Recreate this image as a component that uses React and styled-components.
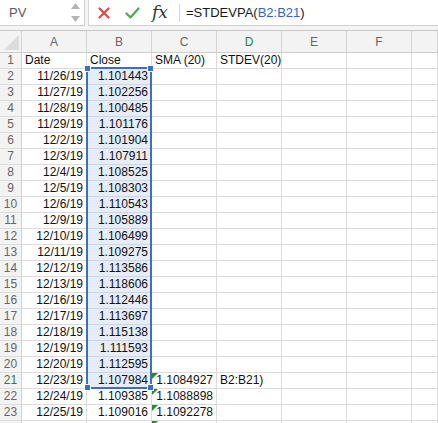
import React from 'react'
import styled, { createGlobalStyle } from 'styled-components'

const GlobalStyle = createGlobalStyle`
  html, body {
    margin: 0;
    padding: 0;
    background: #ffffff;
  }
  body {
    width: 438px;
    height: 423px;
    overflow: hidden;
    font-family: "Liberation Sans", Arial, sans-serif;
  }
`

const Sheet = styled.div`
  width: 438px;
  height: 423px;
  overflow: hidden;
  display: flex;
  flex-direction: column;
`

const FormulaBar = styled.div`
  height: 31px;
  box-sizing: border-box;
  display: flex;
  background: #f4f4f4;
  border-bottom: 1px solid #c6c6c6;
  flex-shrink: 0;
`

const NameBox = styled.div`
  width: 85px;
  height: 26px;
  box-sizing: border-box;
  background: #ffffff;
  border-right: 1px solid #cfcfcf;
  border-bottom: 1px solid #cfcfcf;
  display: flex;
  align-items: center;
  padding-left: 9px;
  font-size: 13px;
  color: #5a5a5a;
  position: relative;
`

const Spinner = styled.div`
  position: absolute;
  right: 4px;
  top: 3px;
  bottom: 3px;
  width: 9px;
  display: flex;
  flex-direction: column;
  justify-content: space-between;
  align-items: center;
`

const FormulaField = styled.div`
  flex: 1;
  height: 26px;
  box-sizing: border-box;
  margin-left: 3px;
  background: #ffffff;
  border-left: 1px solid #d6d6d6;
  border-bottom: 1px solid #cfcfcf;
  display: flex;
  align-items: center;
`

const IconButton = styled.div`
  width: ${p => p.w || 27}px;
  display: flex;
  justify-content: center;
  align-items: center;
`

const Fx = styled.span`
  font-family: "DejaVu Serif", "Liberation Serif", serif;
  font-style: italic;
  font-size: 17px;
  color: #333;
  padding-bottom: 2px;
`

const Divider = styled.div`
  width: 1px;
  height: 18px;
  background: #d6d6d6;
  margin: 0 6px 0 4px;
`

const FormulaText = styled.div`
  font-size: 13px;
  color: #1a1a1a;
  white-space: nowrap;
`

const Ref = styled.span`
  color: #3466c8;
`

const Grid = styled.div`
  position: relative;
  flex: 1;
`

const Row = styled.div`
  display: grid;
  grid-template-columns: 22px repeat(6, 65px) 1fr;
  height: ${p => (p.header ? 22 : 16)}px;
`

const Cell = styled.div`
  box-sizing: border-box;
  border-right: 1px solid ${p => (p.sel ? '#ccd5e6' : '#dcdcdc')};
  border-bottom: 1px solid ${p => (p.sel ? '#ccd5e6' : '#dcdcdc')};
  background: ${p => (p.sel ? '#e6ecf8' : '#ffffff')};
  font-size: 12px;
  line-height: 15px;
  color: #111;
  padding: 0 3px;
  text-align: ${p => p.align || 'left'};
  white-space: nowrap;
  overflow: visible;
  position: relative;
`

const HeadCell = styled.div`
  box-sizing: border-box;
  border-right: 1px solid #d3d3d3;
  border-bottom: 1px solid #cdcdcd;
  background: #f3f3f3;
  font-size: 12px;
  color: ${p => (p.active ? '#2e7d3e' : '#666')};
  display: flex;
  align-items: center;
  justify-content: center;
  position: relative;
`

const RowHead = styled.div`
  box-sizing: border-box;
  border-right: 1px solid #d3d3d3;
  border-bottom: 1px solid #dcdcdc;
  background: #f3f3f3;
  font-size: 12px;
  line-height: 15px;
  color: ${p => (p.active ? '#2e7d3e' : '#666')};
  text-align: center;
`

const Corner = styled.div`
  position: absolute;
  right: 2px;
  bottom: 2px;
  width: 0;
  height: 0;
  border-left: 15px solid transparent;
  border-bottom: 15px solid #dcdcdc;
`

const ErrorMark = styled.div`
  position: absolute;
  left: 0;
  top: 0;
  width: 0;
  height: 0;
  border-top: 6px solid #2f8a2f;
  border-right: 6px solid transparent;
`

const Selection = styled.div`
  position: absolute;
  left: 86px;
  top: 36px;
  width: 66px;
  height: 322px;
  box-sizing: border-box;
  border: 2px solid #3b70c8;
  pointer-events: none;
`

const Handle = styled.div`
  position: absolute;
  width: 5px;
  height: 5px;
  background: #3b70c8;
  border: 1px solid #ffffff;
  box-sizing: content-box;
  ${p => (p.top ? 'top: -4px;' : 'bottom: -4px;')}
  ${p => (p.left ? 'left: -4px;' : 'right: -4px;')}
`

const closes = [
  ['11/26/19', '1.101443'],
  ['11/27/19', '1.102256'],
  ['11/28/19', '1.100485'],
  ['11/29/19', '1.101176'],
  ['12/2/19', '1.101904'],
  ['12/3/19', '1.107911'],
  ['12/4/19', '1.108525'],
  ['12/5/19', '1.108303'],
  ['12/6/19', '1.110543'],
  ['12/9/19', '1.105889'],
  ['12/10/19', '1.106499'],
  ['12/11/19', '1.109275'],
  ['12/12/19', '1.113586'],
  ['12/13/19', '1.118606'],
  ['12/16/19', '1.112446'],
  ['12/17/19', '1.113697'],
  ['12/18/19', '1.115138'],
  ['12/19/19', '1.111593'],
  ['12/20/19', '1.112595'],
  ['12/23/19', '1.107984', '1.1084927', 'B2:B21)'],
  ['12/24/19', '1.109385', '1.1088898'],
  ['12/25/19', '1.109016', '1.1092278'],
  ['', '', ''],
]

const letters = ['A', 'B', 'C', 'D', 'E', 'F', '']

const App = () => {
  return (
    <Sheet>
      <GlobalStyle />
      <FormulaBar>
        <NameBox>
          PV
          <Spinner>
            <svg width="9" height="6" viewBox="0 0 9 6"><path d="M4.5 0L9 6H0z" fill="#b5b5b5" /></svg>
            <svg width="9" height="6" viewBox="0 0 9 6"><path d="M0 0h9L4.5 6z" fill="#b5b5b5" /></svg>
          </Spinner>
        </NameBox>
        <FormulaField>
          <IconButton w={30}>
            <svg width="12" height="12" viewBox="0 0 12 12">
              <path d="M1.5 1.5L10.5 10.5M10.5 1.5L1.5 10.5" stroke="#e0474c" strokeWidth="2.2" strokeLinecap="round" />
            </svg>
          </IconButton>
          <IconButton w={26}>
            <svg width="15" height="12" viewBox="0 0 15 12">
              <path d="M1.5 6.5L5.5 10.5L13.5 1.5" stroke="#4caf50" strokeWidth="2.3" fill="none" strokeLinecap="round" strokeLinejoin="round" />
            </svg>
          </IconButton>
          <IconButton w={30}>
            <Fx>fx</Fx>
          </IconButton>
          <Divider />
          <FormulaText>
            =STDEVPA(<Ref>B2:B21</Ref>)
          </FormulaText>
        </FormulaField>
      </FormulaBar>

      <Grid>
        <Row header>
          <HeadCell>
            <Corner />
          </HeadCell>
          {letters.map((l, i) => (
            <HeadCell key={i} active={l === 'D'}>{l}</HeadCell>
          ))}
        </Row>
        <Row>
          <RowHead>1</RowHead>
          <Cell>Date</Cell>
          <Cell>Close</Cell>
          <Cell>SMA (20)</Cell>
          <Cell>STDEV(20)</Cell>
          <Cell />
          <Cell />
          <Cell />
        </Row>
        {closes.map(([date, close, sma, sd], i) => {
          const n = i + 2
          const inSel = n <= 21
          return (
            <Row key={n}>
              <RowHead active={n === 21}>{n <= 23 ? n : ''}</RowHead>
              <Cell align="right">{date}</Cell>
              <Cell align="right" sel={inSel}>{close}</Cell>
              <Cell align="right">
                {n >= 21 && <ErrorMark />}
                {sma}
              </Cell>
              <Cell>{sd}</Cell>
              <Cell />
              <Cell />
              <Cell />
            </Row>
          )
        })}
        <Selection>
          <Handle top left />
          <Handle top />
          <Handle left />
          <Handle />
        </Selection>
      </Grid>
    </Sheet>
  )
}

export default App
